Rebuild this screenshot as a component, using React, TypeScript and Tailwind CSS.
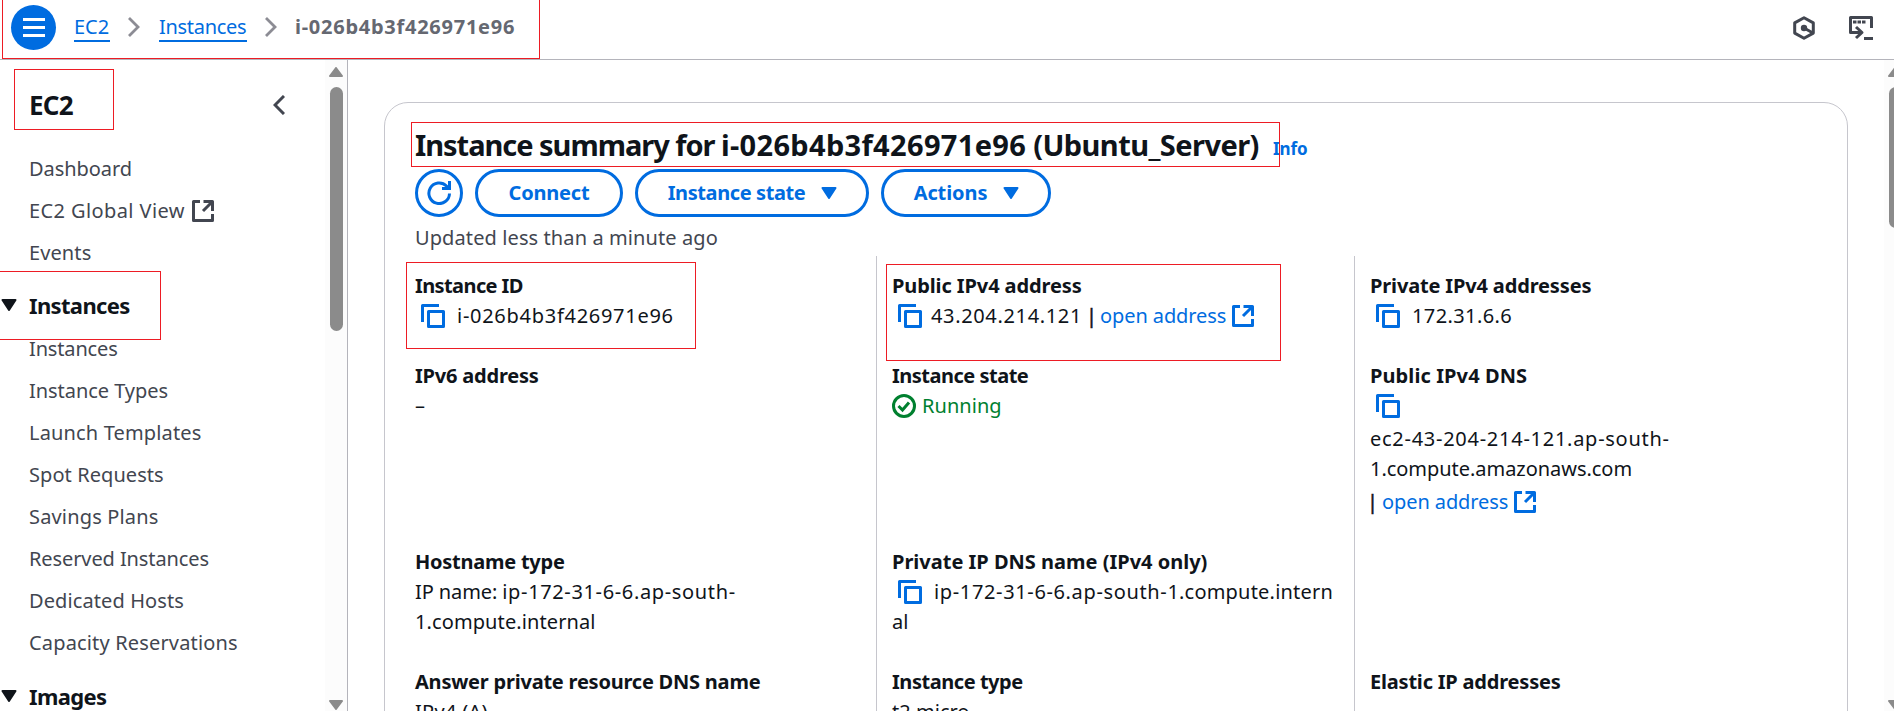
import type { ReactNode } from "react";

const Copy = ({ className = "" }: { className?: string }) => (
  <svg viewBox="0 0 24 24" className={`inline-block size-6 shrink-0 text-[#006ce0] ${className}`} fill="none" stroke="currentColor" strokeWidth="3" strokeLinejoin="round">
    <path d="M1.5 18V1.5H18" />
    <path d="M7.5 7.5h15v15h-15z" />
  </svg>
);

const External = ({ className = "" }: { className?: string }) => (
  <svg viewBox="0 0 22 22" className={`inline-block size-[22px] shrink-0 ${className}`} fill="none" stroke="currentColor" strokeWidth="3" strokeLinejoin="round">
    <path d="M8 1.5H1.5v19h19V14" />
    <path d="M11.5 1.5h9V11M20 2l-9 9" />
  </svg>
);

const Caret = ({ className = "" }: { className?: string }) => (
  <svg viewBox="0 0 16 12" className={`shrink-0 ${className}`} fill="currentColor" stroke="currentColor" strokeWidth="2" strokeLinejoin="round">
    <path d="M1.5 1h13L8 11z" />
  </svg>
);

const Chevron = () => (
  <svg viewBox="0 0 12 20" className="h-5 w-3 shrink-0 text-[#8c8c94]" fill="none" stroke="currentColor" strokeWidth="2.8">
    <path d="M1 1l9 9-9 9" />
  </svg>
);

const Arrow = ({ className = "" }: { className?: string }) => (
  <svg viewBox="0 0 14 10" className={`h-[10px] w-[14px] shrink-0 text-[#8b8b8b] ${className}`} fill="currentColor" stroke="currentColor" strokeWidth="2" strokeLinejoin="round">
    <path d="M1 9h12L7 1z" />
  </svg>
);

const RedBox = ({ className }: { className: string }) => (
  <div className={`pointer-events-none absolute z-10 border border-[#ed1c24] ${className}`} />
);

const Nav = ({ children, className = "" }: { children: ReactNode; className?: string }) => (
  <li className={`flex h-[42px] items-center pl-[29px] ${className}`}>{children}</li>
);

const Section = ({ children }: { children: ReactNode }) => (
  <h3 className="flex items-center pl-px text-[22px] leading-[30px] font-bold tracking-[-0.65px] text-[#0f141a]">
    <Caret className="mr-3 h-3 w-4" />
    {children}
  </h3>
);

const Label = ({ children, className = "" }: { children: ReactNode; className?: string }) => (
  <dt className={`font-bold whitespace-nowrap ${className}`}>{children}</dt>
);

const OpenAddress = () => (
  <>
    <span className="tracking-[-0.1px] text-[#006ce0]">open address</span>
    <External className="ml-[6px] text-[#006ce0]" />
  </>
);

const button =
  "flex h-12 items-center justify-center rounded-full border-[3px] border-[#006ce0] font-bold text-[#006ce0]";

export default function App() {
  return (
    <div className="relative flex h-[711px] w-[1894px] flex-col overflow-hidden bg-white font-['Noto_Sans','Open_Sans',sans-serif] text-[20px] leading-[30px] text-[#0f141a]">
      <RedBox className="-top-1 left-[2px] h-[63px] w-[538px]" />
      <RedBox className="top-[69px] left-[14px] h-[61px] w-[100px]" />
      <RedBox className="top-[271px] -left-1 h-[69px] w-[165px]" />
      <RedBox className="top-[122px] left-[411px] h-[45px] w-[869px]" />
      <RedBox className="top-[262px] left-[406px] h-[87px] w-[290px]" />
      <RedBox className="top-[264px] left-[886px] h-[97px] w-[395px]" />

      <header className="flex h-[60px] shrink-0 items-center border-b border-[#b4b4bb] pb-[5px] pl-[11px]">
        <button className="mt-px flex size-[45px] flex-col items-center justify-center gap-[5px] rounded-full bg-[#006ce0]">
          <span className="h-[3px] w-[22px] bg-white" />
          <span className="h-[3px] w-[22px] bg-white" />
          <span className="h-[3px] w-[22px] bg-white" />
        </button>
        <nav className="flex items-center">
          <a className="ml-[18px] w-9 border-b-2 border-[#006ce0] pt-[2px] leading-[26px] tracking-[0px] text-[#006ce0]">EC2</a>
          <span className="mx-[18px]"><Chevron /></span>
          <a className="ml-px w-[88px] border-b-2 border-[#006ce0] pt-[2px] leading-[26px] tracking-[-0.3px] text-[#006ce0]">Instances</a>
          <span className="mx-[18px]"><Chevron /></span>
          <span className="font-bold tracking-[0.74px] text-[#656871]">i-026b4b3f426971e96</span>
        </nav>
        <div className="mt-[2px] mr-[21px] ml-auto flex items-center gap-[34px] text-[#424650]">
          <svg viewBox="0 0 22 24" className="h-6 w-[22px]" fill="none" stroke="currentColor" strokeWidth="3" strokeLinejoin="round">
            <path d="M11 1.8l9.3 5.1v10.2L11 22.2l-9.3-5.1V6.9z" />
            <path d="M11 12l9 5" />
            <circle cx="11" cy="12" r="3.2" fill="currentColor" stroke="none" />
          </svg>
          <svg viewBox="0 0 24 24" className="size-6" fill="none" stroke="currentColor" strokeWidth="3" strokeLinejoin="round">
            <path d="M22.5 12V1.5h-21v15H13" />
            <path d="M7 11l6 5.500-6 5.500" />
            <path d="M15 22.500h9" />
            <path d="M4 6h13" strokeDasharray="3.500 1" />
          </svg>
        </div>
      </header>

      <div className="flex min-h-0 flex-1">
        <aside className="flex w-[348px] shrink-0 border-r border-[#b4b4bb]">
          <div className="min-w-0 flex-1 text-[#424650]">
            <div className="mt-[26px] flex h-[38px] items-center pr-[40px] pl-[29px]">
              <h2 className="text-[26px] font-bold tracking-[-0.8px] text-[#0f141a]">EC2</h2>
              <svg viewBox="0 0 12 20" className="ml-auto h-5 w-3" fill="none" stroke="currentColor" strokeWidth="3">
                <path d="M11 1l-9 9 9 9" />
              </svg>
            </div>
            <ul className="mt-[24px]">
              <Nav className="tracking-[-0.05px]">Dashboard</Nav>
              <Nav className="tracking-[0.4px]">EC2 Global View<External className="ml-[7px]" /></Nav>
              <Nav className="tracking-[0.1px]">Events</Nav>
            </ul>
            <div className="mt-[16px]"><Section>Instances</Section></div>
            <ul className="mt-[8px]">
              <Nav className="tracking-[-0.15px]">Instances</Nav>
              <Nav className="tracking-[-0.05px]">Instance Types</Nav>
              <Nav className="tracking-[0.15px]">Launch Templates</Nav>
              <Nav className="tracking-[0.07px]">Spot Requests</Nav>
              <Nav className="tracking-[0.16px]">Savings Plans</Nav>
              <Nav className="tracking-[-0.1px]">Reserved Instances</Nav>
              <Nav className="tracking-[0.1px]">Dedicated Hosts</Nav>
              <Nav className="tracking-[0.16px]">Capacity Reservations</Nav>
            </ul>
            <div className="mt-[17px]"><Section>Images</Section></div>
          </div>
          <div className="flex w-[22px] flex-col items-center bg-[#fcfcfc] pt-[7px] pb-px">
            <Arrow />
            <div className="mt-[10px] h-[244px] w-[13px] rounded-full bg-[#8b8b8b]" />
            <Arrow className="mt-auto rotate-180" />
          </div>
        </aside>

        <main className="flex-1 overflow-hidden pt-[42px] pl-[36px]">
          <section className="h-[700px] w-[1464px] rounded-t-[24px] border border-[#c6c6cd] pt-[20px] pl-[30px]">
            <div className="flex h-[46px] items-center">
              <h1 className="w-[858px] pb-[3px] text-[29px] leading-[40px] font-bold whitespace-nowrap">
                <span className="tracking-[-1.03px]">Instance summary for </span>
                <span className="tracking-[0.34px]">i-026b4b3f426971e96</span>
                <span className="tracking-[-0.56px]"> (Ubuntu_Server)</span>
              </h1>
              <a className="pt-[6px] text-[17px] leading-[30px] font-bold tracking-[-0.1px] text-[#006ce0]">Info</a>
            </div>
            <div className="flex gap-3">
              <button className={`${button} w-12`}>
                <svg viewBox="0 0 24 24" className="size-6" fill="none" stroke="currentColor" strokeWidth="3">
                  <path d="M22.500 12.500A10.300 10.300 0 1 1 19.500 5L22 7.500" />
                  <path d="M22.500 0v7.500H15" />
                </svg>
              </button>
              <button className={`${button} w-[148px] tracking-[-0.2px]`}>Connect</button>
              <button className={`${button} w-[234px] gap-4 pl-px tracking-[-0.4px]`}>Instance state<Caret className="h-3 w-4" /></button>
              <button className={`${button} w-[170px] gap-4 pl-px tracking-[-0.1px]`}>Actions<Caret className="h-3 w-4" /></button>
            </div>
            <p className="mt-[6px] tracking-[0.1px] text-[#424650]">Updated less than a minute ago</p>

            <dl className="mt-[3px] grid h-[460px] grid-cols-[461px_478px_480px]">
              <div className="flex flex-col gap-[30px] pt-[15px]">
                <div>
                  <Label className="tracking-[-0.6px]">Instance ID</Label>
                  <dd className="flex items-center pl-[6px] tracking-[0.72px]"><Copy className="mr-3" />i-026b4b3f426971e96</dd>
                </div>
                <div className="h-[156px]">
                  <Label className="tracking-[-0.2px]">IPv6 address</Label>
                  <dd>–</dd>
                </div>
                <div>
                  <Label className="tracking-[-0.25px]">Hostname type</Label>
                  <dd>
                    <span className="tracking-[-0.1px]">IP name: </span>
                    <span className="tracking-[0.64px]">ip-172-31-6-6.ap-south-</span>
                    <br />
                    <span className="tracking-[0.1px]">1.compute.internal</span>
                  </dd>
                </div>
                <div>
                  <Label className="tracking-[-0.22px]">Answer private resource DNS name</Label>
                  <dd className="tracking-[0.3px]">IPv4 (A)</dd>
                </div>
              </div>
              <div className="flex flex-col gap-[30px] border-l border-[#c6c6cd] pt-[15px] pl-[15px]">
                <div>
                  <Label className="tracking-[-0.1px]">Public IPv4 address</Label>
                  <dd className="flex items-center pl-[6px] whitespace-nowrap">
                    <Copy className="mr-[9px]" />
                    <span className="tracking-[0.65px]">43.204.214.121</span>
                    <span className="mr-[3px] ml-[4px] [-webkit-text-stroke:0.5px]">|</span>
                    <OpenAddress />
                  </dd>
                </div>
                <div className="h-[156px]">
                  <Label className="tracking-[-0.5px]">Instance state</Label>
                  <dd className="flex items-center tracking-[0.05px] text-[#00802f]">
                    <svg viewBox="0 0 24 24" className="mr-[6px] size-6" fill="none" stroke="currentColor" strokeWidth="3">
                      <circle cx="12" cy="12" r="10.5" />
                      <path d="M6.500 12l4 4 6.500-7.500" />
                    </svg>
                    Running
                  </dd>
                </div>
                <div>
                  <Label className="tracking-[0px]">Private IP DNS name (IPv4 only)</Label>
                  <dd>
                    <span className="flex items-center pl-[6px]">
                      <Copy className="mr-3" />
                      <span className="tracking-[0.64px]">ip-172-31-6-6.ap-south-</span>
                      <span className="tracking-[0.2px]">1.compute.intern</span>
                    </span>
                    al
                  </dd>
                </div>
                <div>
                  <Label className="tracking-[-0.45px]">Instance type</Label>
                  <dd>t2.micro</dd>
                </div>
              </div>
              <div className="flex flex-col gap-[30px] border-l border-[#c6c6cd] pt-[15px] pl-[15px]">
                <div>
                  <Label className="tracking-[-0.15px]">Private IPv4 addresses</Label>
                  <dd className="flex items-center pl-[6px] tracking-[0.4px]"><Copy className="mr-3" />172.31.6.6</dd>
                </div>
                <div className="h-[156px]">
                  <Label className="tracking-[0.1px]">Public IPv4 DNS</Label>
                  <dd>
                    <span className="flex h-[33px] items-center pb-[3px] pl-[6px]"><Copy /></span>
                    <span className="tracking-[0.73px]">ec2-43-204-214-121.ap-south-</span>
                    <br />
                    <span className="tracking-[-0.04px]">1.compute.amazonaws.com</span>
                    <span className="flex h-[33px] items-center pt-[3px]">
                      <span className="mr-[4px] -ml-[3px] [-webkit-text-stroke:0.5px]">|</span>
                      <OpenAddress />
                    </span>
                  </dd>
                </div>
                <div className="h-[90px]" />
                <div>
                  <Label className="tracking-[-0.2px]">Elastic IP addresses</Label>
                </div>
              </div>
            </dl>
          </section>
        </main>
        <div className="flex w-[10px] shrink-0 flex-col overflow-hidden bg-[#fcfcfc] pt-[7px] pb-px pl-1">
          <Arrow />
          <div className="mt-[10px] ml-px h-[141px] w-[13px] shrink-0 rounded-full bg-[#8b8b8b]" />
          <Arrow className="mt-auto rotate-180" />
        </div>
      </div>
    </div>
  );
}
